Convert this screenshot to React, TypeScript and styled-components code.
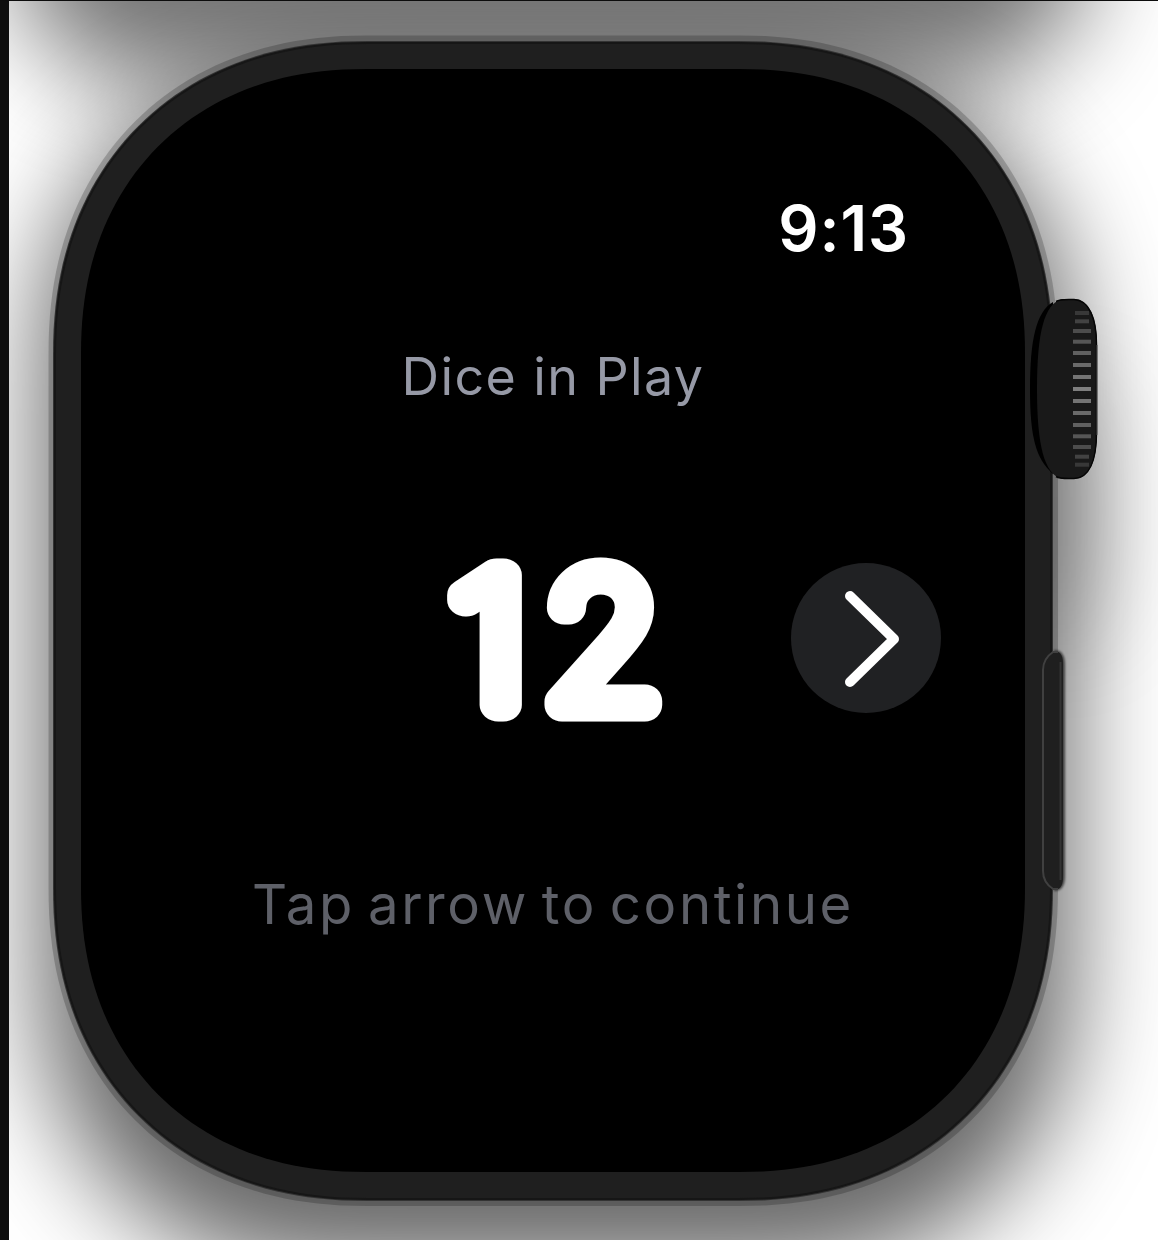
import React from "react";
import styled, { createGlobalStyle } from "styled-components";

const GlobalStyle = createGlobalStyle`
  html, body { margin: 0; padding: 0; background: #fff; }
  * { box-sizing: border-box; }
`;

const Page = styled.main`
  display: flex;
  width: 1158px;
  height: 1240px;
  overflow: hidden;
  border-top: 1px solid #0c0c0c;
  border-left: 9px solid #0e0e0e;
  background: #fff;
  font-family: Inter, "Liberation Sans", sans-serif;
`;

const Watch = styled.section`
  position: relative;
  flex: 1;
  padding: 68px 124px 68px 72px;
`;

const Chassis = styled.svg`
  position: absolute;
  left: -9px;
  top: -1px;
  width: 1158px;
  height: 1240px;
  clip-path: inset(1px 0 0 9px);
`;

const Screen = styled.div`
  position: relative;
  display: flex;
  flex-direction: column;
  width: 944px;
  height: 1103px;
`;

const Label = styled.div<{ $size: number; $color: string; $track: number; $weight?: number; $gap?: number }>`
  font-size: ${(p) => p.$size}px;
  font-weight: ${(p) => p.$weight ?? 400};
  line-height: 70px;
  letter-spacing: ${(p) => p.$track}px;
  word-spacing: ${(p) => p.$gap ?? 0}px;
  color: ${(p) => p.$color};
  white-space: nowrap;
`;

const StatusBar = styled.header`
  display: flex;
  justify-content: flex-end;
  padding: 124px 116px 0 0;
`;

const Heading = styled.div`
  display: flex;
  justify-content: center;
  padding-top: 79px;
`;

const CounterRow = styled.div`
  display: grid;
  grid-template-columns: 1fr 240px 1fr;
  align-items: center;
  height: 200px;
  margin-top: 126px;
`;

const Count = styled.svg`
  grid-column: 2;
  width: 240px;
  height: 200px;
  overflow: visible;
  text {
    font-family: Inter, "Liberation Sans", sans-serif;
    font-size: 178px;
    font-weight: 100;
    fill: #fff;
    stroke: #fff;
    stroke-width: 33px;
    stroke-linejoin: round;
    stroke-linecap: round;
  }
`;

const NextButton = styled.button`
  display: grid;
  place-items: center;
  justify-self: end;
  width: 150px;
  height: 150px;
  margin-right: 84px;
  padding: 0;
  border: 0;
  border-radius: 50%;
  background: #202123;
`;

const Hint = styled.footer`
  display: flex;
  justify-content: center;
  padding-top: 131px;
`;

/** Rounded rectangle whose corners are superellipse arcs of extent r. */
function squircle(x0: number, y0: number, x1: number, y1: number, r: number, n = 2.2) {
  const steps = 48;
  const arc = Array.from({ length: steps + 1 }, (_, i) => {
    const t = (i / steps) * (Math.PI / 2);
    return [
      r * (1 - Math.pow(Math.max(0, Math.sin(t)), 2 / n)),
      r * (1 - Math.pow(Math.max(0, Math.cos(t)), 2 / n)),
    ];
  });
  const back = [...arc].reverse();
  const pts = [
    ...arc.map(([a, b]) => [x0 + a, y0 + b]),
    ...back.map(([a, b]) => [x0 + a, y1 - b]),
    ...arc.map(([a, b]) => [x1 - a, y1 - b]),
    ...back.map(([a, b]) => [x1 - a, y0 + b]),
  ];
  return "M" + pts.map(([x, y]) => `${x.toFixed(2)} ${y.toFixed(2)}`).join("L") + "Z";
}

const ridges = [313, 321.3, 331, 341.7, 353, 365, 377, 389, 401, 413, 425, 436.3, 447, 456.7, 464.7];

function WatchChassis() {
  return (
    <Chassis viewBox="0 0 1158 1240" aria-hidden="true">
      <defs>
        <filter id="soft" filterUnits="userSpaceOnUse" x="-300" y="-900" width="1800" height="2500">
          <feGaussianBlur stdDeviation="52" />
        </filter>
        <filter id="edge" x="-50%" y="-20%" width="200%" height="140%">
          <feGaussianBlur stdDeviation="1" />
        </filter>
      </defs>
      <path d={squircle(14, -600, 1088, 80, 140)} fill="#000" opacity="0.54" filter="url(#soft)" />
      <path d={squircle(40, 70, 1072, 1270, 300)} fill="#000" opacity="0.6" filter="url(#soft)" />
      <rect x="1030" y="390" width="68" height="240" rx="30" fill="#000" opacity="0.25" filter="url(#soft)" />
      <path d={squircle(48.5, 35.5, 1058, 1206, 319)} fill="#000" opacity="0.2" />
      <path d={squircle(53, 41, 1053, 1201, 315)} fill="#333" />
      <path d={squircle(54, 42, 1052, 1200, 314)} fill="#161616" />
      <path d={squircle(56, 44, 1050, 1198, 312)} fill="#1f1f1f" />
      <path d={squircle(81, 69, 1025, 1172, 286)} fill="#000" />
      <path d="M1053 302 C1036 312 1030 340 1030 389 C1030 438 1036 459 1053 474Z" fill="#000" />
      <path d="M1062 299 H1074 C1089 299 1097 318 1097 345 V432 C1097 461 1089 479 1074 479 H1062 C1044 474 1037 445 1037 389 C1037 333 1044 304 1062 299Z" fill="#191919" />
      <path d="M1056 301.5 C1060 299 1064 299.5 1074 299.5 C1089 300 1096.5 318 1096.5 345 V432 C1096.5 461 1089 478 1074 478.5 C1064 478.5 1060 479 1056 476.5" fill="none" stroke="#050505" strokeWidth="1.5" />
      <path d="M1097 345 V435" stroke="#555" strokeWidth="1" />
      {ridges.map((y, i) => {
        const d = Math.abs(i - 7);
        const shade = Math.round(126 - d * 10);
        const left = d > 5 ? 1075 : 1073;
        return <rect key={y} x={left} y={y - 2} width={(d > 5 ? 1089 : 1091) - left} height="4" fill={`rgb(${shade},${shade},${shade})`} />;
      })}
      <path d="M1054 650 C1062 650 1065 656 1065 665 V876 C1065 885 1062 891 1054 891Z" fill="#000" opacity=".6" filter="url(#edge)" />
      <path d="M1053 652 H1058 C1061 653 1063 657 1063 664 V877 C1063 884 1061 888 1058 889 H1053 C1047 885 1043 879 1043 871 V670 C1043 662 1047 656 1053 652Z" fill="#1f1f1f" />
      <path d="M1058 652 H1053 C1047 656 1043 662 1043 670 V871 C1043 879 1047 885 1053 889 H1058" fill="none" stroke="#404040" strokeWidth="2" />
      <path d="M1060.5 662 V880" stroke="#333" strokeWidth="2" />
    </Chassis>
  );
}

export default function App() {
  return (
    <>
      <GlobalStyle />
      <Page>
        <Watch>
          <WatchChassis />
          <Screen>
            <StatusBar>
              <Label $size={63} $color="#fff" $track={0.9} $weight={580}>9:13</Label>
            </StatusBar>
            <Heading>
              <Label $size={52} $color="#9699a6" $track={1.4} $weight={430}>Dice in Play</Label>
            </Heading>
            <CounterRow>
              <Count viewBox="0 0 240 200">
                <text transform="translate(18.5 167) scale(1.14 1)">1</text>
                <text transform="translate(111.5 167) scale(1.06 1)">2</text>
              </Count>
              <NextButton aria-label="Next">
                <svg width="150" height="150" viewBox="0 0 150 150" fill="none" stroke="#fff" strokeWidth="10" strokeLinecap="round" strokeLinejoin="round">
                  <path d="M59 33 L103 76 L59 119" />
                </svg>
              </NextButton>
            </CounterRow>
            <Hint>
              <Label $size={54.5} $color="#5e6068" $track={2.6} $gap={-5} $weight={440}>Tap arrow to continue</Label>
            </Hint>
          </Screen>
        </Watch>
      </Page>
    </>
  );
}
